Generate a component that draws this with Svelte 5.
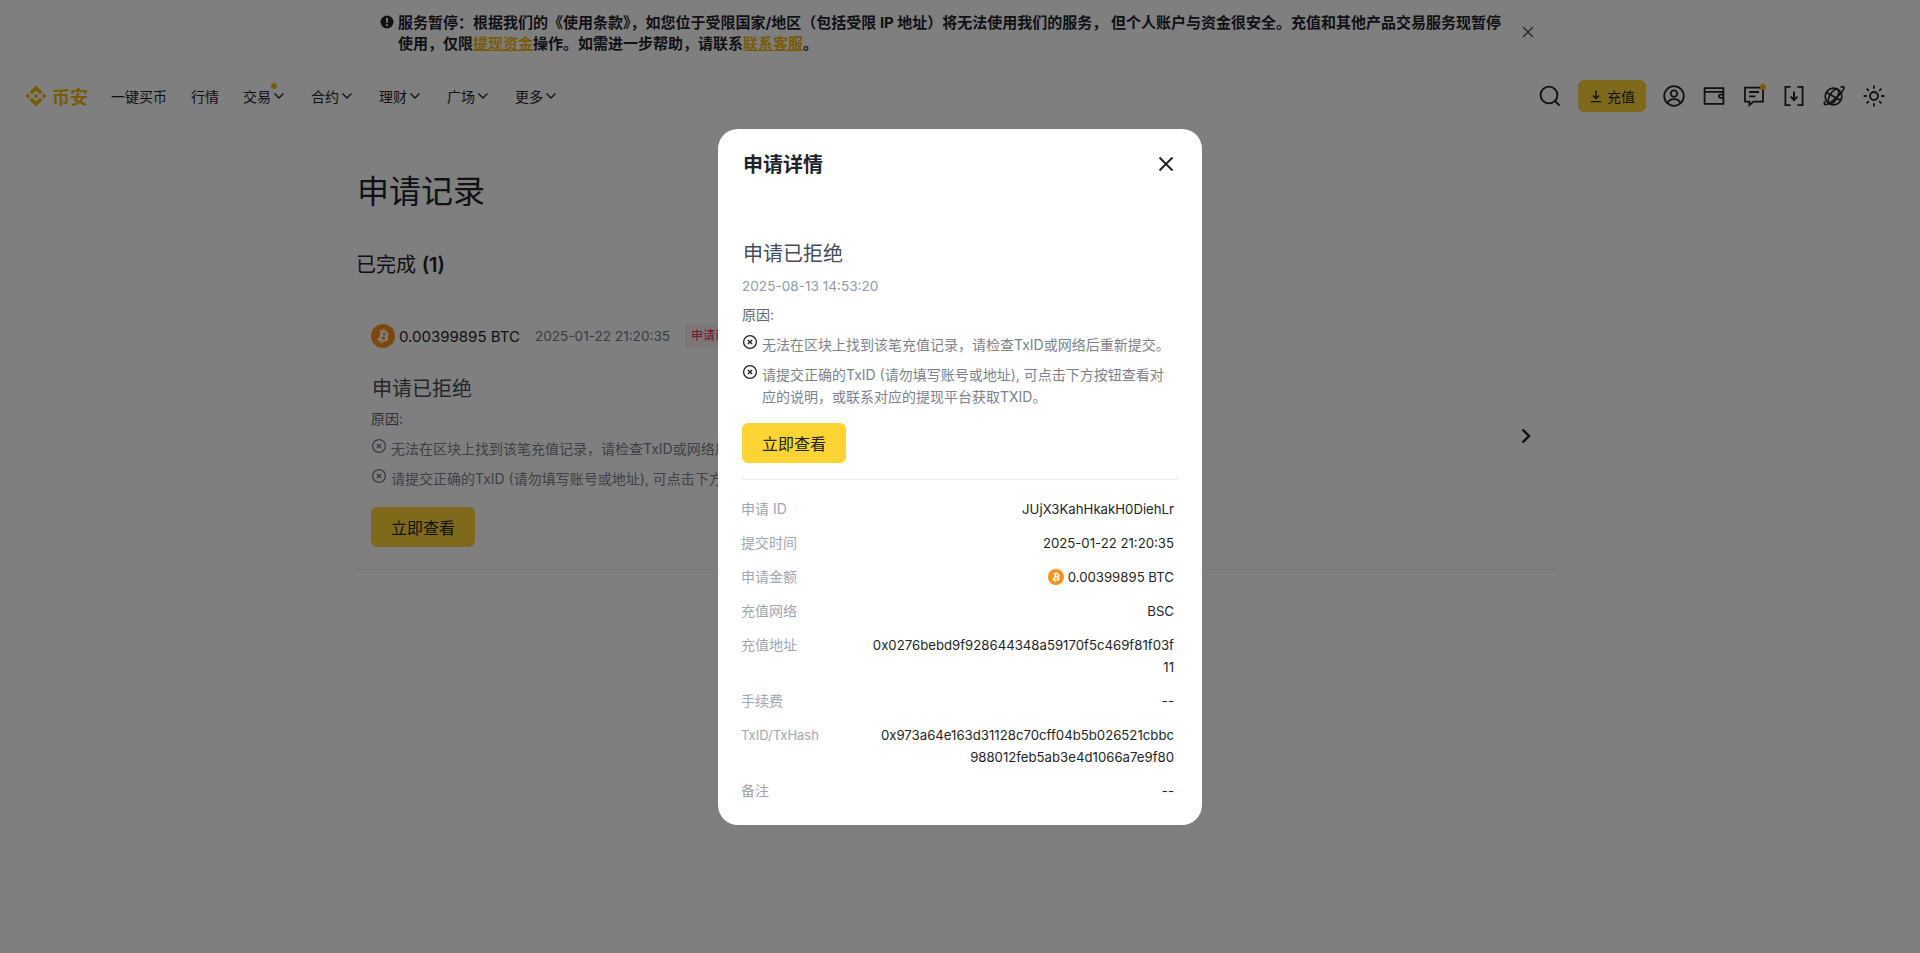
<script>
  const BTC = 'M23.189 14.02c.314-2.096-1.283-3.223-3.465-3.975l.708-2.84-1.728-.43-.69 2.765c-.454-.114-.92-.22-1.385-.326l.695-2.783L15.596 6l-.708 2.839c-.376-.086-.746-.17-1.104-.26l.002-.009-2.384-.595-.46 1.846s1.283.294 1.256.312c.7.175.826.638.805 1.006l-.806 3.235c.048.012.11.03.18.057l-.183-.045-1.13 4.532c-.086.212-.303.531-.793.41.018.025-1.256-.313-1.256-.313l-.858 1.978 2.25.561c.418.105.828.215 1.231.318l-.715 2.872 1.727.43.708-2.84c.472.127.93.245 1.378.357l-.706 2.828 1.728.43.715-2.866c2.948.558 5.164.333 6.097-2.333.752-2.146-.037-3.385-1.588-4.192 1.13-.26 1.98-1.003 2.207-2.538zm-3.95 5.538c-.533 2.147-4.148.986-5.32.695l.95-3.805c1.172.293 4.929.872 4.37 3.11zm.535-5.569c-.487 1.953-3.495.96-4.47.717l.86-3.45c.975.243 4.118.696 3.61 2.733z'

  const navItems = [
    { label: '一键买币' },
    { label: '行情' },
    { label: '交易', arrow: true, dot: true },
    { label: '合约', arrow: true },
    { label: '理财', arrow: true },
    { label: '广场', arrow: true },
    { label: '更多', arrow: true }
  ]

  const details = [
    { label: '申请 ID', value: 'JUjX3KahHkakH0DiehLr' },
    { label: '提交时间', value: '2025-01-22 21:20:35' },
    { label: '申请金额', value: '0.00399895 BTC', coin: true },
    { label: '充值网络', value: 'BSC' },
    { label: '充值地址', value: '0x0276bebd9f928644348a59170f5c469f81f03f\n11' },
    { label: '手续费', value: '--' },
    { label: 'TxID/TxHash', value: '0x973a64e163d31128c70cff04b5b026521cbbc\n988012feb5ab3e4d1066a7e9f80', small: true },
    { label: '备注', value: '--' }
  ]
</script>

{#snippet coin(size)}
  <svg class="coin" width={size} height={size} viewBox="0 0 32 32">
    <circle cx="16" cy="16" r="16" fill="#F7931A" />
    <path d={BTC} fill="#fff" />
  </svg>
{/snippet}

{#snippet crossCircle()}
  <svg class="cross" width="16" height="16" viewBox="0 0 16 16" fill="none" stroke="currentColor">
    <circle cx="8" cy="8" r="6.4" stroke-width="1.3" />
    <path d="M5.9 5.9l4.2 4.2M10.1 5.9l-4.2 4.2" stroke-width="1.4" />
  </svg>
{/snippet}

<div class="page">
  <div class="banner">
    <svg class="banner-icon" width="14" height="14" viewBox="0 0 14 14">
      <circle cx="7" cy="7" r="6.5" fill="#1e2329" />
      <path d="M6 3h2l-.3 5H6.3zM6.1 9.2h1.8V11H6.1z" fill="#fff" />
    </svg>
    <p>服务暂停：根据我们的《使用条款》，如您位于受限国家/地区（包括受限 IP 地址）将无法使用我们的服务， 但个人账户与资金很安全。充值和其他产品交易服务现暂停<br />使用，仅限<a href="#top">提现资金</a>操作。如需进一步帮助，请联系<a href="#top">联系客服</a>。</p>
    <svg class="banner-close" width="14" height="14" viewBox="0 0 14 14" fill="none" stroke="#474d57" stroke-width="1.3">
      <path d="M2 2l10 10M12 2L2 12" />
    </svg>
  </div>

  <header>
    <div class="logo">
      <svg width="24" height="24" viewBox="0 0 24 24" fill="#F0B90B">
        <path d="M7.9 10.5 12 6.4l4.1 4.1 2.4-2.4L12 1.6 5.5 8.1l2.4 2.4zM1.6 12 4 9.6 6.4 12 4 14.4 1.6 12zm6.3 1.5L12 17.6l4.1-4.1 2.4 2.4L12 22.4l-6.5-6.5 2.4-2.4zM17.6 12l2.4-2.4 2.4 2.4-2.4 2.4-2.4-2.4zm-3.2 0L12 9.6 9.6 12l2.4 2.4 2.4-2.4z" />
      </svg>
      <span>币安</span>
    </div>
    <nav>
      {#each navItems as item}
        <div class="nav-item">
          {item.label}
          {#if item.arrow}
            <svg width="16" height="16" viewBox="0 0 16 16" fill="none" stroke="#1e2329" stroke-width="1.4">
              <path d="M3.5 4.5 8 9l4.500-4.500" />
            </svg>
          {/if}
          {#if item.dot}<i class="dot"></i>{/if}
        </div>
      {/each}
    </nav>
    <div class="tools">
      <svg class="search" width="24" height="24" viewBox="0 0 24 24" fill="none" stroke="#1e2329" stroke-width="1.9">
        <circle cx="11" cy="11" r="8.4" /><path d="M17 17l4.6 4.6" />
      </svg>
      <button class="deposit">
        <svg width="14" height="14" viewBox="0 0 14 14" fill="none" stroke="#1e2329" stroke-width="1.4">
          <path d="M7 1.500v8M3.800 6.400 7 9.600l3.200-3.200M2 12.600h10" />
        </svg>
        充值
      </button>
      <svg width="24" height="24" viewBox="0 0 24 24" fill="none" stroke="#1e2329" stroke-width="1.8">
        <circle cx="12" cy="12" r="9.8" /><circle cx="12" cy="9.6" r="3.3" /><path d="M5.600 19.400c.8-3 3.400-4.200 6.400-4.200s5.600 1.200 6.400 4.200" />
      </svg>
      <svg width="24" height="24" viewBox="0 0 24 24" fill="none" stroke="#1e2329" stroke-width="1.8">
        <path d="M2.600 4.200h18.800v15.600H2.600zM2.600 7.800h18.800M21.400 10.600h-2.800a1.500 1.500 0 0 0 0 3.200h2.800" />
      </svg>
      <div class="msg">
        <svg width="24" height="24" viewBox="0 0 24 24" fill="none" stroke="#1e2329" stroke-width="1.8">
          <path d="M3 3.600h18v14h-9.400L7.400 21v-3.400H3zM7 8h10M7 12.400h6.400" />
        </svg>
        <i class="dot"></i>
      </div>
      <svg width="24" height="24" viewBox="0 0 24 24" fill="none" stroke="#1e2329" stroke-width="1.8">
        <path d="M8.600 2.800H3.400v18.400h5.200M15.400 2.800h5.200v18.400h-5.200" />
        <path d="M12 7.400v8.400M8.600 12.600l3.400 3.400 3.400-3.400" stroke-width="2" />
      </svg>
      <svg width="24" height="24" viewBox="0 0 24 24" fill="none" stroke="#1e2329" stroke-width="1.7">
        <circle cx="11.500" cy="12.500" r="8.300" />
        <ellipse cx="11.500" cy="12.500" rx="3.800" ry="8.300" transform="rotate(30 11.500 12.500)" />
        <path d="M4.400 8.400l14.400 8.200" />
        <path d="M18.600 3.400c1.800-1.100 3-1 3.400 0 .7 1.500-3.200 6.200-8.200 10.700-5 4.400-9.500 7.300-11.100 6.300-.8-.5-.6-1.600.4-3" />
      </svg>
      <svg width="24" height="24" viewBox="0 0 24 24" fill="none" stroke="#1e2329" stroke-width="1.8">
        <circle cx="12" cy="12" r="4" />
        <path d="M12 1.600v3.200M12 19.200v3.200M1.600 12h3.200M19.200 12h3.200M4.600 4.600l2.200 2.200M17.200 17.200l2.200 2.200M4.600 19.400l2.200-2.200M17.200 6.800l2.200-2.200" />
      </svg>
    </div>
  </header>

  <main>
    <h1>申请记录</h1>
    <h2>已完成 <b>(1)</b></h2>
    <section class="record">
      <div class="record-body">
        <div class="record-head">
          {@render coin(24)}
          <span class="amount">0.00399895 BTC</span>
          <span class="time">2025-01-22 21:20:35</span>
          <span class="tag">申请已拒绝</span>
        </div>
        <h3>申请已拒绝</h3>
        <div class="reason-title">原因:</div>
        <div class="reason nowrap">{@render crossCircle()}<span>无法在区块上找到该笔充值记录，请检查TxID或网络后重新提交。</span></div>
        <div class="reason nowrap">{@render crossCircle()}<span>请提交正确的TxID (请勿填写账号或地址), 可点击下方按钮查看对应的说明，或联系对应的提现平台获取TXID。</span></div>
        <button class="view">立即查看</button>
      </div>
      <svg class="chevron" width="24" height="24" viewBox="0 0 24 24" fill="none" stroke="#1e2329" stroke-width="2.4">
        <path d="M8.500 5.500 15 12l-6.500 6.500" />
      </svg>
    </section>
  </main>
</div>

<div class="overlay">
  <div class="modal">
    <div class="modal-head">
      <span>申请详情</span>
      <svg width="24" height="24" viewBox="0 0 24 24" fill="none" stroke="#1e2329" stroke-width="2">
        <path d="M5.500 5.500l13 13M18.500 5.500l-13 13" />
      </svg>
    </div>
    <h3>申请已拒绝</h3>
    <div class="modal-time">2025-08-13 14:53:20</div>
    <div class="reason-title">原因:</div>
    <div class="reason strong nowrap">{@render crossCircle()}<span>无法在区块上找到该笔充值记录，请检查TxID或网络后重新提交。</span></div>
    <div class="reason strong">{@render crossCircle()}<span>请提交正确的TxID (请勿填写账号或地址), 可点击下方按钮查看对应的说明，或联系对应的提现平台获取TXID。</span></div>
    <button class="view">立即查看</button>
    <hr />
    <dl>
      {#each details as row}
        <div class="row">
          <dt class:small={row.small}>{row.label}</dt>
          <dd>
            {#if row.coin}{@render coin(16)}{/if}
            <span>{row.value}</span>
          </dd>
        </div>
      {/each}
    </dl>
  </div>
</div>

<style>
  :global(body) {
    background: #fff;
    color: #1e2329;
    font-family: Inter, "Noto Sans CJK SC", sans-serif;
    font-size: 14px;
  }

  .banner {
    height: 60px;
    box-sizing: border-box;
    padding: 12px 0 0 380px;
    display: flex;
    gap: 4px;
  }
  .banner p {
    margin: 0;
    width: 1116px;
    font-size: 15px;
    line-height: 21px;
    font-weight: 700;
  }
  .banner a {
    color: #F0B90B;
    text-decoration: underline;
  }
  .banner-icon {
    margin-top: 3px;
    flex: none;
  }
  .banner-close {
    margin: 13px 0 0 3px;
    flex: none;
  }

  header {
    height: 72px;
    display: flex;
    align-items: center;
    padding: 0 34px 0 24px;
  }
  .logo {
    display: flex;
    align-items: center;
    gap: 4px;
    color: #F0B90B;
    font-weight: 700;
    font-size: 18px;
    margin-right: 23px;
  }
  nav {
    display: flex;
    gap: 24px;
    padding-top: 2px;
  }
  .nav-item {
    display: flex;
    align-items: center;
    position: relative;
    line-height: 20px;
  }
  .nav-item .dot {
    top: -4px;
    left: 28px;
  }
  .dot {
    position: absolute;
    width: 6px;
    height: 6px;
    border-radius: 50%;
    background: #F0B90B;
  }
  .tools {
    margin-left: auto;
    display: flex;
    align-items: center;
    gap: 16px;
  }
  .deposit {
    display: flex;
    align-items: center;
    gap: 4px;
    height: 32px;
    width: 68px;
    justify-content: center;
    border: 0;
    padding: 0;
    border-radius: 6px;
    background: #FCD535;
    color: #1e2329;
    font: inherit;
  }
  .msg {
    position: relative;
    height: 24px;
  }
  .msg .dot {
    top: 0;
    right: 0;
  }

  main {
    margin-left: 354px;
    width: 1203px;
    padding-top: 40px;
  }
  h1 {
    margin: 0 0 0 3px;
    font-size: 32px;
    line-height: 40px;
    font-weight: 400;
  }
  h2 {
    margin: 41px 0 0 2px;
    font-size: 20px;
    line-height: 24px;
    font-weight: 400;
  }
  h2 b {
    font-weight: 600;
  }
  .record {
    margin-top: 23px;
    padding: 24px 19px 22px 17px;
    border-bottom: 1px solid #eaecef;
    display: flex;
    align-items: center;
    justify-content: space-between;
  }
  .record-head {
    display: flex;
    align-items: center;
    height: 24px;
  }
  .coin {
    flex: none;
  }
  .amount {
    margin-left: 4px;
    font-size: 15px;
  }
  .time {
    margin-left: 15px;
    font-size: 13.6px;
    color: #707a8a;
  }
  .tag {
    margin-left: 15px;
    padding: 0 6px;
    line-height: 24px;
    border-radius: 4px;
    font-size: 12px;
    background: #fdebee;
    color: #D9304E;
  }
  h3 {
    margin: 26px 0 0 1px;
    font-size: 20px;
    line-height: 30px;
    font-weight: 400;
    color: #474d57;
  }
  .reason-title {
    margin-top: 4px;
    line-height: 22px;
    color: #5e6673;
  }
  .reason {
    display: flex;
    margin-top: 8px;
    line-height: 22px;
    color: #7c828c;
  }
  .nowrap {
    white-space: nowrap;
  }
  .cross {
    flex: none;
    margin: 0 4px 0 0;
    color: #707a8a;
  }
  .reason.strong .cross {
    color: #1e2329;
  }
  .reason.strong span {
    max-width: 405px;
  }
  .view {
    display: block;
    margin-top: 17px;
    width: 104px;
    height: 40px;
    border: 0;
    padding: 0;
    border-radius: 6px;
    background: #FCD535;
    color: #1e2329;
    font: inherit;
    font-size: 16px;
  }

  .overlay {
    position: fixed;
    inset: 0;
    background: rgba(0, 0, 0, 0.5);
    display: flex;
    align-items: center;
    justify-content: center;
  }
  .modal {
    width: 484px;
    height: 696px;
    box-sizing: border-box;
    padding: 24px 24px 0;
    background: #fff;
    border-radius: 20px;
  }
  .modal-head {
    display: flex;
    justify-content: space-between;
    align-items: center;
    font-size: 20px;
    font-weight: 700;
    line-height: 24px;
    margin-left: 1px;
  }
  .modal-head svg {
    margin-top: -2px;
  }
  .modal h3 {
    margin: 62px 0 0 1px;
  }
  .modal-time {
    margin-top: 6px;
    line-height: 22px;
    font-size: 13.6px;
    color: #929aa5;
  }
  .modal .reason-title {
    margin-top: 7px;
  }
  .modal .view {
    margin-top: 15px;
  }
  hr {
    margin: 16px 0 0;
    border: 0;
    border-top: 1px solid #eaecef;
  }
  dl {
    margin: 18px 4px 0 -1px;
    display: flex;
    flex-direction: column;
    gap: 12px;
  }
  .row {
    display: flex;
    justify-content: space-between;
    line-height: 22px;
    font-size: 13.2px;
  }
  dt {
    color: #a0a6af;
    flex: none;
    font-size: 14px;
  }
  dt.small {
    font-size: 13px;
  }
  dd {
    margin: 0;
    text-align: right;
    white-space: pre-line;
    display: flex;
    align-items: center;
    gap: 4px;
    justify-content: flex-end;
  }
</style>
